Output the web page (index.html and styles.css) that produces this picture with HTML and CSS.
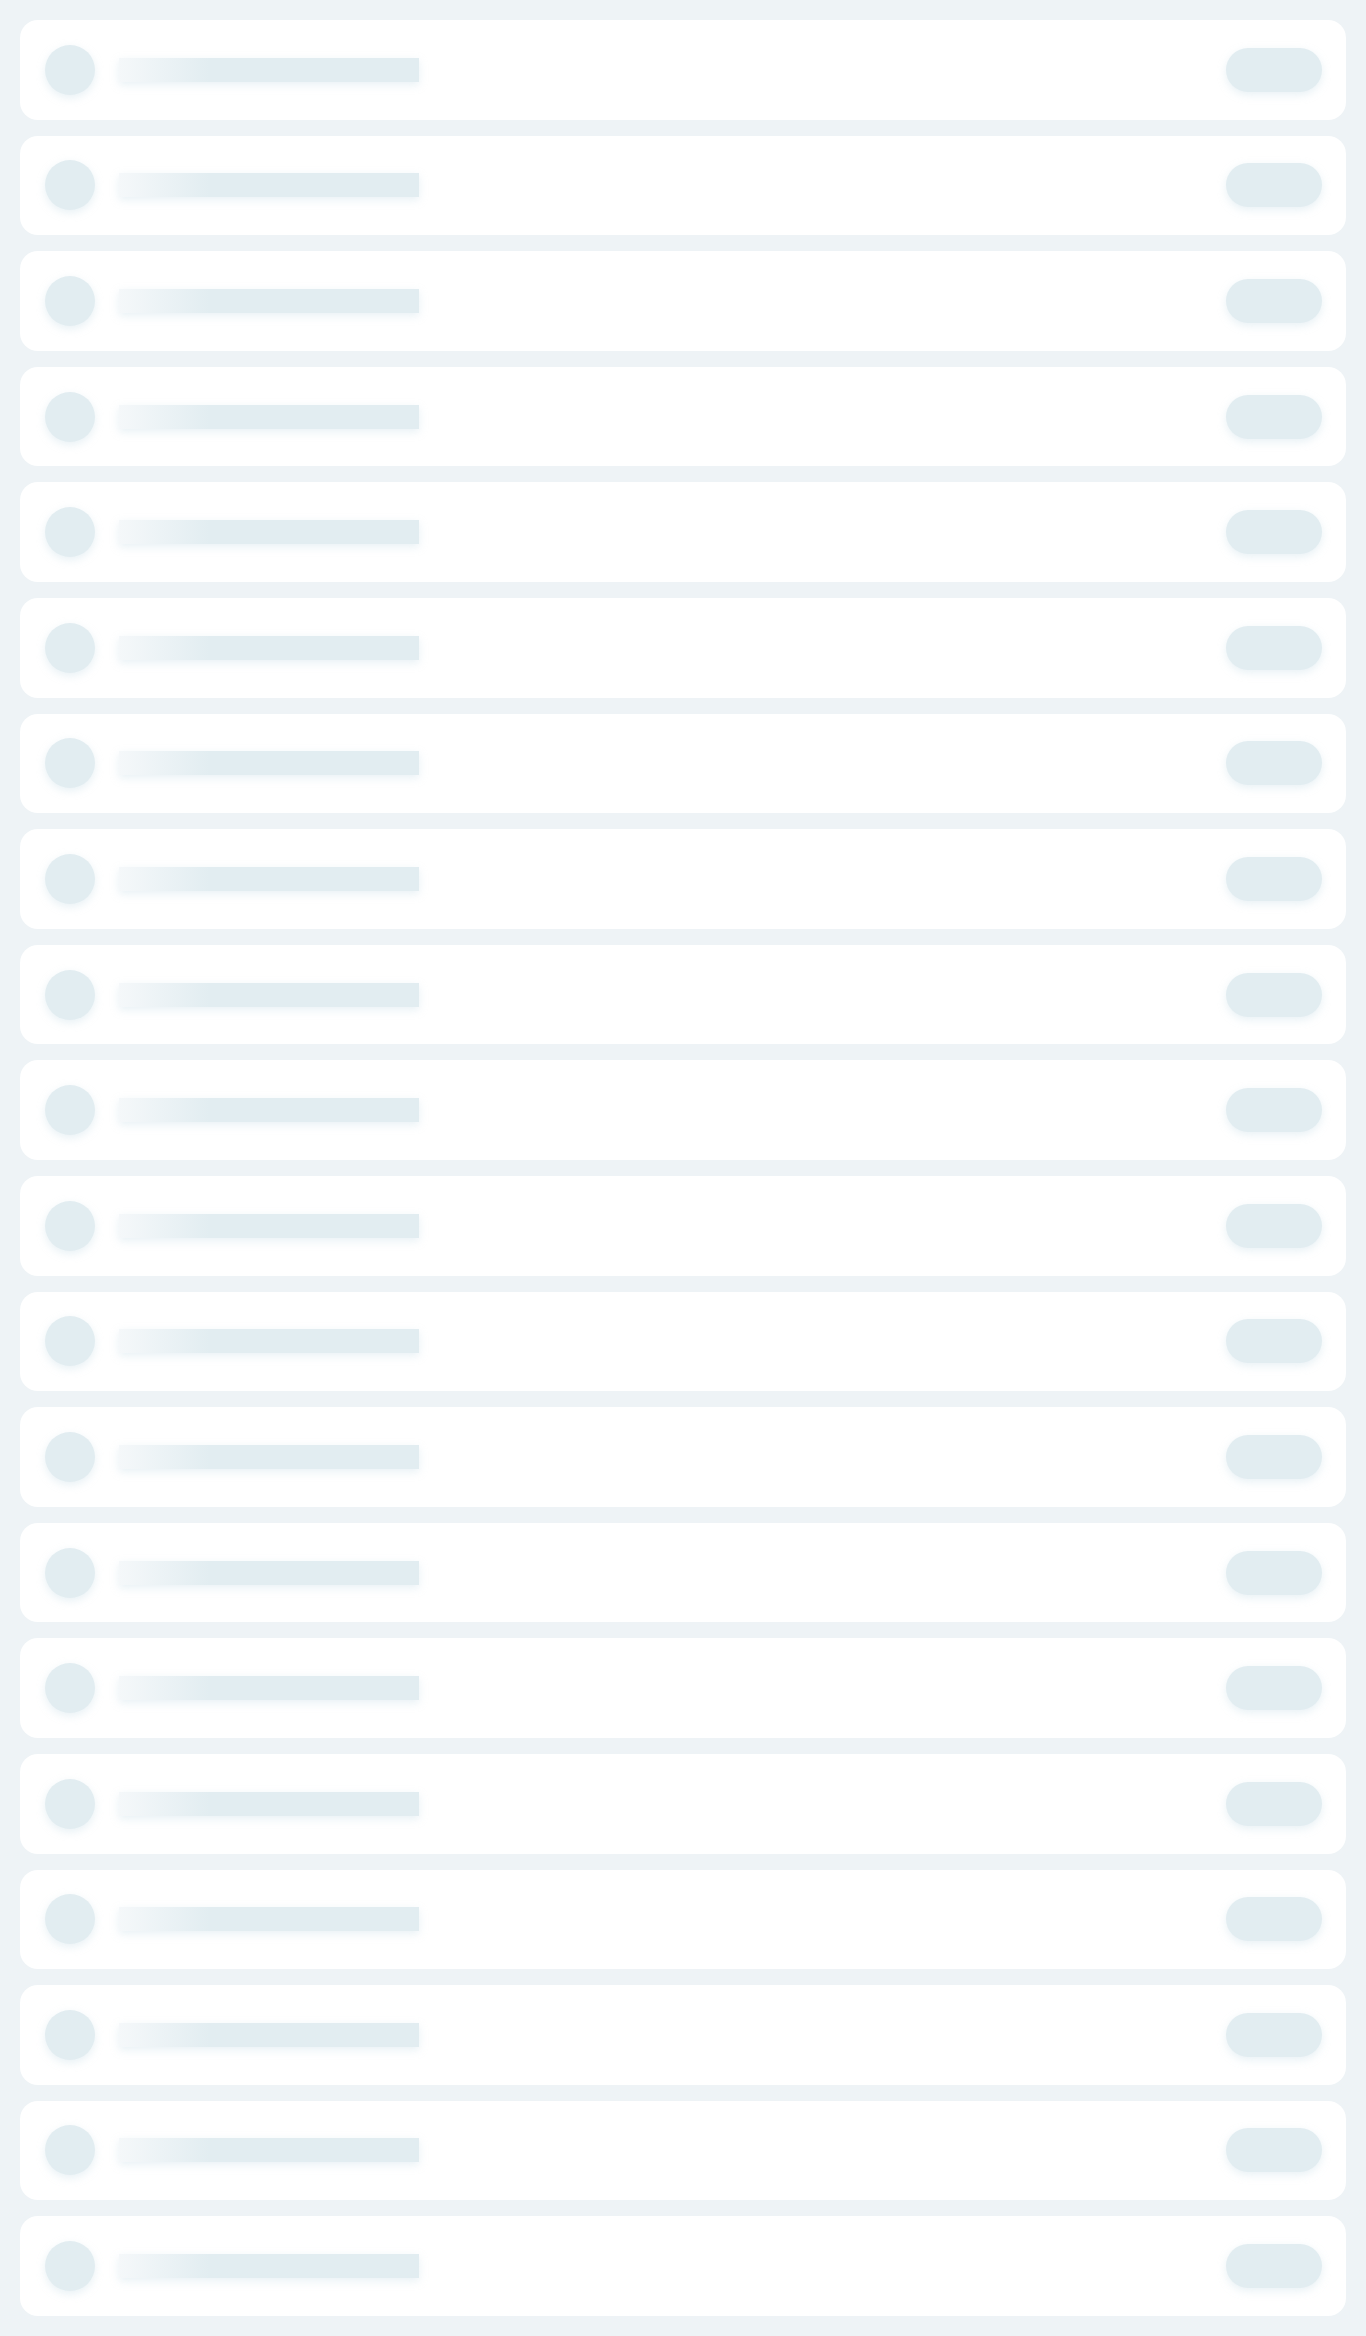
FILE: index.html
```html
<!DOCTYPE html>
<html>
<head>
<meta charset="utf-8">
<link rel="stylesheet" href="styles.css">
</head>
<body>
<div class="list">
  <div class="card"><div class="avatar"></div><div class="line"></div><div class="pill"></div></div>
  <div class="card"><div class="avatar"></div><div class="line"></div><div class="pill"></div></div>
  <div class="card"><div class="avatar"></div><div class="line"></div><div class="pill"></div></div>
  <div class="card"><div class="avatar"></div><div class="line"></div><div class="pill"></div></div>
  <div class="card"><div class="avatar"></div><div class="line"></div><div class="pill"></div></div>
  <div class="card"><div class="avatar"></div><div class="line"></div><div class="pill"></div></div>
  <div class="card"><div class="avatar"></div><div class="line"></div><div class="pill"></div></div>
  <div class="card"><div class="avatar"></div><div class="line"></div><div class="pill"></div></div>
  <div class="card"><div class="avatar"></div><div class="line"></div><div class="pill"></div></div>
  <div class="card"><div class="avatar"></div><div class="line"></div><div class="pill"></div></div>
  <div class="card"><div class="avatar"></div><div class="line"></div><div class="pill"></div></div>
  <div class="card"><div class="avatar"></div><div class="line"></div><div class="pill"></div></div>
  <div class="card"><div class="avatar"></div><div class="line"></div><div class="pill"></div></div>
  <div class="card"><div class="avatar"></div><div class="line"></div><div class="pill"></div></div>
  <div class="card"><div class="avatar"></div><div class="line"></div><div class="pill"></div></div>
  <div class="card"><div class="avatar"></div><div class="line"></div><div class="pill"></div></div>
  <div class="card"><div class="avatar"></div><div class="line"></div><div class="pill"></div></div>
  <div class="card"><div class="avatar"></div><div class="line"></div><div class="pill"></div></div>
  <div class="card"><div class="avatar"></div><div class="line"></div><div class="pill"></div></div>
  <div class="card"><div class="avatar"></div><div class="line"></div><div class="pill"></div></div>
</div>
</body>
</html>
```
FILE: styles.css
```css
html, body {
  margin: 0;
  padding: 0;
  background: #eef3f6;
  font-family: "Liberation Sans", Arial, sans-serif;
}
.list {
  box-sizing: border-box;
  height: 100vh;
  padding: 20px;
  display: flex;
  flex-direction: column;
  gap: 16px;
}
.card {
  flex: 1 1 0;
  display: flex;
  align-items: center;
  background: #ffffff;
  border-radius: 18px;
  padding: 0 24px 0 25px;
}
.avatar {
  width: 50px;
  height: 50px;
  border-radius: 50%;
  background: #e2edf1;
  box-shadow: 0 3px 8px rgba(190, 215, 225, 0.35);
  flex: none;
}
.line {
  width: 300px;
  height: 24px;
  margin-left: 24px;
  background: linear-gradient(90deg, #f5f8fa 0%, #e2edf1 30%, #e2edf1 100%);
  box-shadow: 0 3px 8px rgba(190, 215, 225, 0.35);
  flex: none;
}
.pill {
  margin-left: auto;
  width: 96px;
  height: 44px;
  border-radius: 22px;
  background: #e2edf1;
  box-shadow: 0 3px 8px rgba(190, 215, 225, 0.35);
  flex: none;
}
```
